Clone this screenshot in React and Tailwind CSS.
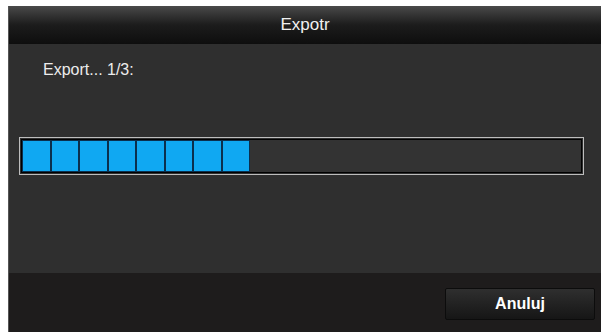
import React from "react";

export default function App() {
  const blocks = Array.from({ length: 8 });
  return (
    <div className="w-[604px] h-[334px] bg-white pt-[6px] pl-[8px] pr-[3px] pb-[2px]" style={{ fontFamily: '"Liberation Sans", Arial, sans-serif' }}>
      <div className="w-full h-full flex flex-col bg-[#2e2e2e] border-l border-[#555]">
        <div className="h-[38px] flex items-center justify-center bg-gradient-to-b from-[#4a4a4a] via-[#1c1c1c] to-[#0e0e0e] text-[#f0f0f0] text-[17px]">
          Expotr
        </div>
        <div className="h-[229px] flex flex-col bg-[#2f2f2f]">
          <div className="pl-[34px] pt-[16px] text-[16px] text-[#ececec] leading-[20px]">Export... 1/3:</div>
          <div className="ml-[10px] mt-[57px] w-[565px] h-[38px] border border-[#bdbdbd] p-[1px]">
            <div className="w-full h-full border border-black bg-[#333] flex">
              <div className="flex h-full bg-[#0b2f4d] p-[1px] gap-[2px]">
                {blocks.map((_, i) => (
                  <div key={i} className="w-[26.5px] h-full bg-[#10a8f2]" />
                ))}
              </div>
            </div>
          </div>
        </div>
        <div className="flex-1 bg-[#1e1c1c] flex items-start justify-end pt-[15px] pr-[6px]">
          <div className="w-[150px] h-[32px] flex items-center justify-center rounded-[2px] bg-gradient-to-b from-[#2f2f2f] to-[#161616] border border-[#0c0c0c] text-white text-[16px] font-bold">
            Anuluj
          </div>
        </div>
      </div>
    </div>
  );
}
